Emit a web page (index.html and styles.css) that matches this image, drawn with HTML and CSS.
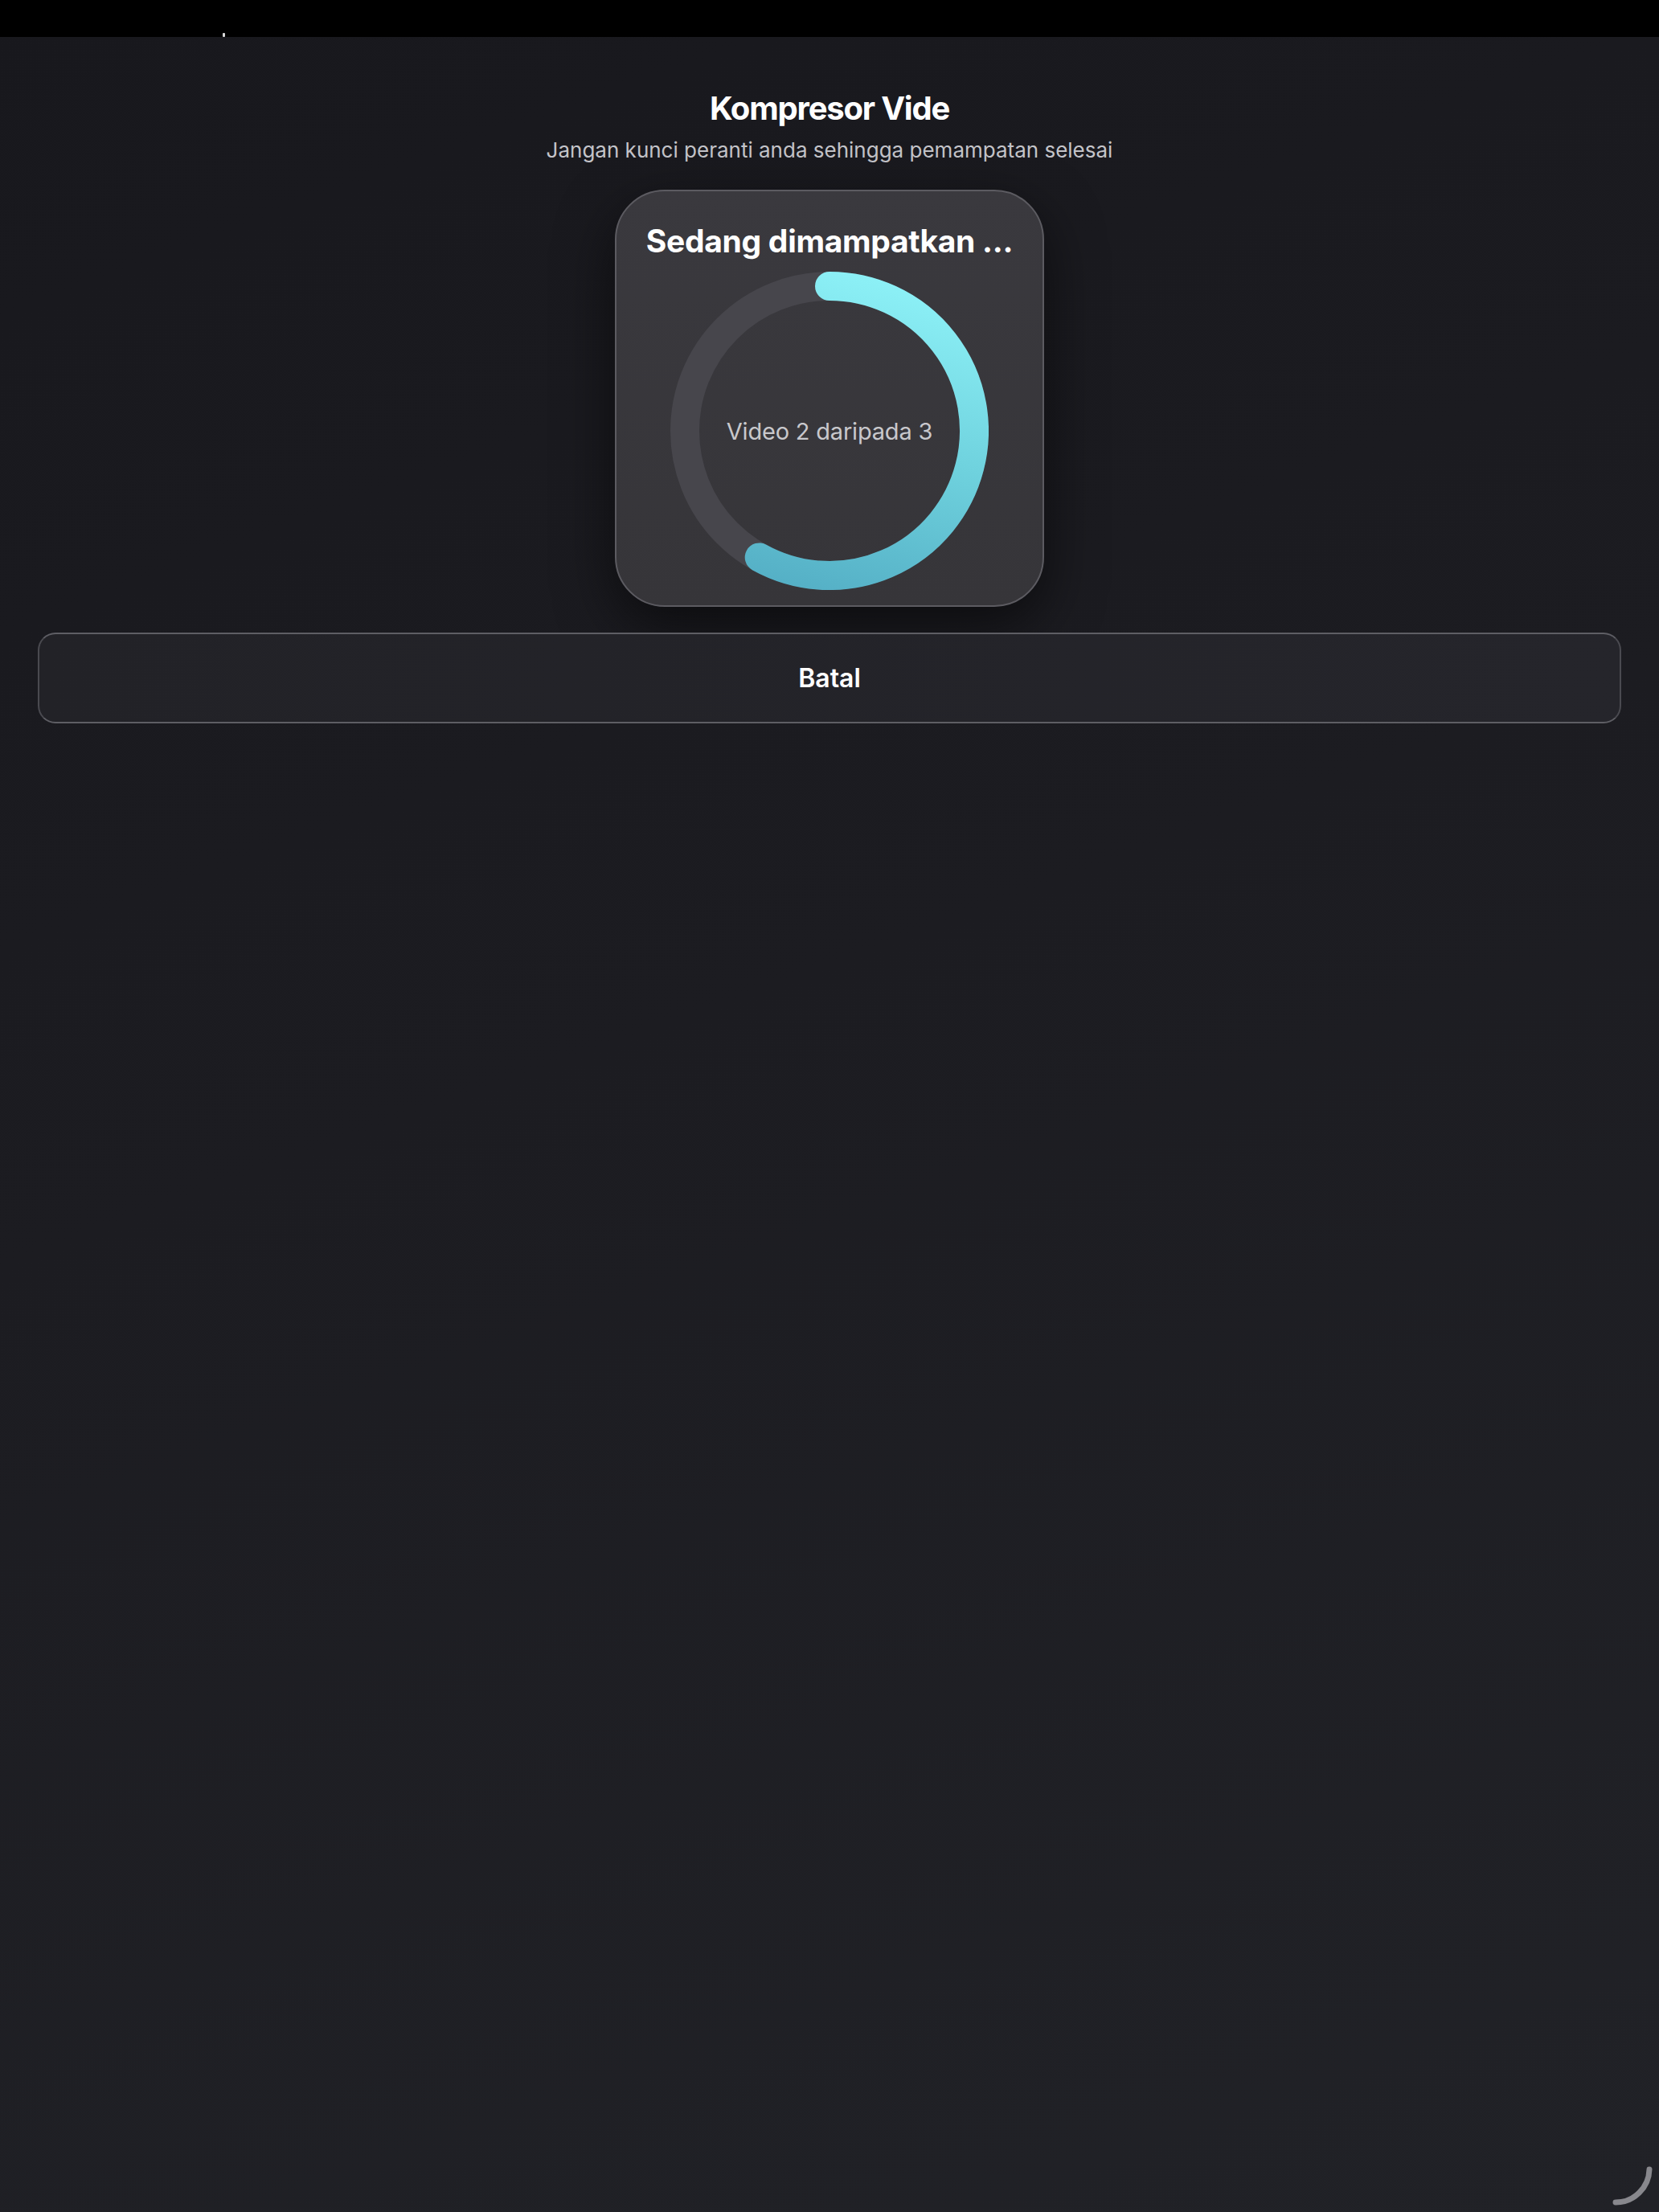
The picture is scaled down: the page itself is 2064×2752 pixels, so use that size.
FILE: index.html
```html
<!DOCTYPE html>
<html lang="ms">
<head>
<meta charset="utf-8">
<title>Kompresor Vide</title>
<link rel="stylesheet" href="styles.css">
</head>
<body>
<div class="topbar"><span class="topbar-mark"></span></div>
<main class="screen">
  <h1 class="title">Kompresor Vide</h1>
  <p class="subtitle">Jangan kunci peranti anda sehingga pemampatan selesai</p>
  <section class="card">
    <h2 class="card-title">Sedang dimampatkan ...</h2>
    <div class="ring">
      <svg class="ring-svg" width="396" height="396" viewBox="0 0 396 396">
        <defs>
          <linearGradient id="prog" gradientUnits="userSpaceOnUse" x1="250" y1="10" x2="150" y2="390">
            <stop offset="0" stop-color="#8cf0f6"/>
            <stop offset="0.5" stop-color="#6fd2de"/>
            <stop offset="1" stop-color="#55b0c6"/>
          </linearGradient>
        </defs>
        <circle cx="198" cy="198" r="180" fill="none" stroke="#47464c" stroke-width="36"/>
        <path d="M198 18 A180 180 0 1 1 110.7 355.4" fill="none" stroke="url(#prog)" stroke-width="36" stroke-linecap="round"/>
      </svg>
      <span class="ring-label">Video 2 daripada 3</span>
    </div>
  </section>
  <button class="cancel" type="button">Batal</button>
</main>
<svg class="spinner" width="60" height="60" viewBox="0 0 60 60">
  <path d="M48 7 A42 42 0 0 1 6 48" fill="none" stroke="#88888d" stroke-width="7" stroke-linecap="round"/>
</svg>
</body>
</html>
```
FILE: styles.css
```css
html, body {
  margin: 0;
  padding: 0;
}
body {
  width: 2064px;
  min-height: 2752px;
  background: linear-gradient(160deg, #18181d 0%, #1c1c21 45%, #212227 100%);
  font-family: Inter, "Noto Sans", sans-serif;
  color: #fff;
  position: relative;
  overflow: hidden;
}
.topbar {
  height: 46px;
  background: #000;
  position: relative;
}
.topbar-mark {
  position: absolute;
  left: 277px;
  top: 41px;
  width: 3px;
  height: 5px;
  background: #d8d8d8;
  border-radius: 1px;
}
.screen {
  display: flex;
  flex-direction: column;
  align-items: center;
  padding: 65px 47px 0;
}
.title {
  margin: 0;
  font-size: 40px;
  line-height: 48px;
  font-weight: 700;
  letter-spacing: -1.2px;
  color: #fff;
}
.subtitle {
  margin: 12px 0 0;
  font-size: 26px;
  line-height: 32px;
  font-weight: 400;
  color: #c4c4c9;
}
.card {
  margin-top: 33px;
  box-sizing: border-box;
  width: 534px;
  height: 519px;
  border-radius: 62px;
  border: 2px solid #5c5b61;
  background: linear-gradient(180deg, #3a393e 0%, #363539 100%);
  box-shadow: 0 24px 70px rgba(0, 0, 0, 0.55);
  display: flex;
  flex-direction: column;
  align-items: center;
  padding-top: 39px;
}
.card-title {
  margin: 0;
  font-size: 39px;
  line-height: 46px;
  font-weight: 700;
  letter-spacing: -0.3px;
  color: #fff;
  white-space: nowrap;
}
.ring {
  margin-top: 15px;
  display: grid;
  place-items: center;
}
.ring-svg, .ring-label {
  grid-area: 1 / 1;
}
.ring-svg {
  display: block;
}
.ring-label {
  font-size: 29px;
  font-weight: 400;
  letter-spacing: -0.2px;
  color: #c8c8cc;
  margin-top: 0;
}
.cancel {
  margin-top: 32px;
  width: 100%;
  height: 113px;
  box-sizing: border-box;
  border-radius: 22px;
  border: 2px solid #4a4a50;
  border-top-color: #5e5e64;
  border-bottom-color: #5e5e64;
  background: linear-gradient(90deg, #222227 0%, #25252b 100%);
  color: #fff;
  font-family: Inter, "Noto Sans", sans-serif;
  font-size: 32px;
  font-weight: 600;
  cursor: pointer;
}
.spinner {
  position: absolute;
  left: 2004px;
  top: 2692px;
}
```
